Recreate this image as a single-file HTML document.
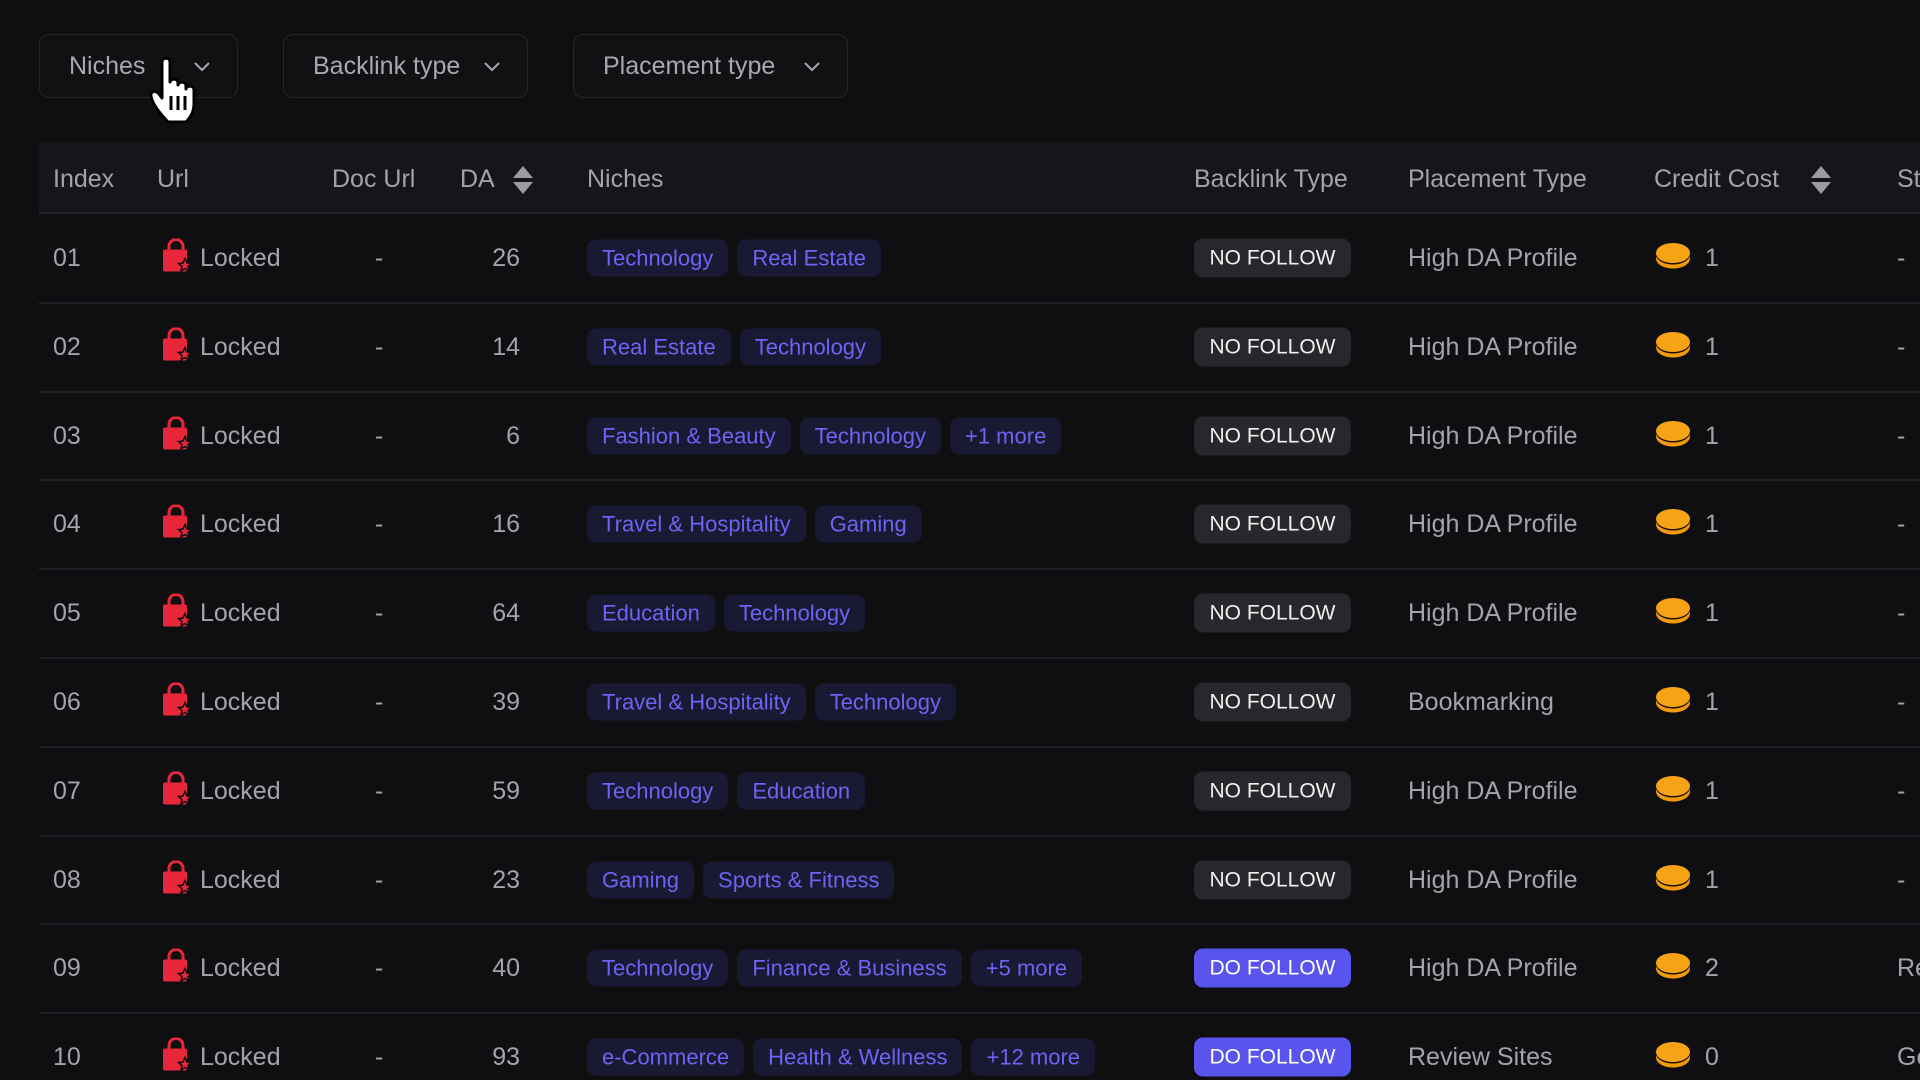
<!DOCTYPE html>
<html><head><meta charset="utf-8"><style>
*{margin:0;padding:0;box-sizing:border-box}
body{width:1920px;height:1080px;background:#0f0f12;overflow:hidden;position:relative;font-family:"Liberation Sans",sans-serif;color:#a3a3ab}
.btn{position:absolute;top:34px;height:64px;border:1.5px solid #26262c;border-radius:10px;background:#111114;display:flex;align-items:center;padding-left:29px;font-size:25px;color:#a8a8b0}
.btn svg{position:absolute;right:26px;top:26px}
.hdr{position:absolute;left:39px;top:143px;width:1881px;height:71px;background:#16161a;border-bottom:2px solid #23232a}
.h{position:absolute;top:164px;font-size:25px;color:#a3a3ab;line-height:30px}
.sort{position:absolute;top:165px}
.sep{position:absolute;left:39px;width:1881px;height:2px;background:#1f1f25}
.c{position:absolute;font-size:25px;line-height:30px;color:#a3a3ab;transform:translateY(-50%)}
.tags{position:absolute;left:587px;display:flex;gap:9px;transform:translateY(-50%)}
.tag{height:37px;border-radius:9px;background:#1a1933;color:#6c64f2;font-size:22px;line-height:37px;padding:0 15px;white-space:nowrap}
.badge{position:absolute;left:1194px;width:157px;height:39px;border-radius:9px;background:#27272c;color:#f0f0f0;font-size:21px;line-height:39px;text-align:center;transform:translateY(-50%)}
.badge.do{background:#5a54ef;color:#fff}
.lock{position:absolute;left:160px;transform:translateY(-50%)}
.coin{position:absolute;left:1655px;transform:translateY(-50%)}
</style></head><body>
<div class="btn" style="left:39px;width:199px">Niches<svg width="18" height="12" viewBox="0 0 18 12"><path d="M2 2l7 7 7-7" fill="none" stroke="#a8a8b0" stroke-width="2"/></svg></div>
<div class="btn" style="left:283px;width:245px">Backlink type<svg width="18" height="12" viewBox="0 0 18 12"><path d="M2 2l7 7 7-7" fill="none" stroke="#a8a8b0" stroke-width="2"/></svg></div>
<div class="btn" style="left:573px;width:275px">Placement type<svg width="18" height="12" viewBox="0 0 18 12"><path d="M2 2l7 7 7-7" fill="none" stroke="#a8a8b0" stroke-width="2"/></svg></div>
<svg style="position:absolute;left:146px;top:56px" width="64" height="68" viewBox="0 0 64 68"><path d="M16 6c0-5 8-5 8 0v20c1-4 8-4 8 1v2c1-4 8-4 8 1v3c1-4 8-4 8 1v14c0 8-4 14-8 18H22C16 60 6 48 5 40c-1-5 5-6 8-2l3 4z" fill="#fff" stroke="#000" stroke-width="3" stroke-linejoin="round"/><path d="M25 40v14M32 40v14M39 40v14" stroke="#000" stroke-width="3"/></svg>
<div class="hdr"></div>
<div class="h" style="left:53px">Index</div>
<div class="h" style="left:157px">Url</div>
<div class="h" style="left:332px">Doc Url</div>
<div class="h" style="left:460px">DA</div>
<svg class="sort" style="left:512px" width="22" height="30" viewBox="0 0 22 30"><path d="M11 1l10 12H1zM11 29L1 17h20z" fill="#9b9ba3"/></svg>
<div class="h" style="left:587px">Niches</div>
<div class="h" style="left:1194px">Backlink Type</div>
<div class="h" style="left:1408px">Placement Type</div>
<div class="h" style="left:1654px">Credit Cost</div>
<svg class="sort" style="left:1810px" width="22" height="30" viewBox="0 0 22 30"><path d="M11 1l10 12H1zM11 29L1 17h20z" fill="#9b9ba3"/></svg>
<div class="h" style="left:1897px">St</div>
<div id="rows"></div>
<script>
var d=[
["01","26",["Technology","Real Estate"],0,"High DA Profile","1","-"],
["02","14",["Real Estate","Technology"],0,"High DA Profile","1","-"],
["03","6",["Fashion &amp; Beauty","Technology","+1 more"],0,"High DA Profile","1","-"],
["04","16",["Travel &amp; Hospitality","Gaming"],0,"High DA Profile","1","-"],
["05","64",["Education","Technology"],0,"High DA Profile","1","-"],
["06","39",["Travel &amp; Hospitality","Technology"],0,"Bookmarking","1","-"],
["07","59",["Technology","Education"],0,"High DA Profile","1","-"],
["08","23",["Gaming","Sports &amp; Fitness"],0,"High DA Profile","1","-"],
["09","40",["Technology","Finance &amp; Business","+5 more"],1,"High DA Profile","2","Re"],
["10","93",["e-Commerce","Health &amp; Wellness","+12 more"],1,"Review Sites","0","Ge"]];
var h="";
var lock='<svg width="32" height="34" viewBox="0 0 32 34"><path d="M9 12V8a7 7 0 0 1 14 0v4" fill="none" stroke="#e8283a" stroke-width="3"/><rect x="3" y="11" width="24" height="22" rx="2" fill="#e8283a"/><path d="M25 20l2 4.5 4.5.5-3.5 3 1 4.5-4-2.5-4 2.5 1-4.5-3.5-3 4.5-.5z" fill="#e8283a" stroke="#0f0f12" stroke-width="1.5"/></svg>';
var coin='<svg width="36" height="28" viewBox="0 0 36 28"><ellipse cx="18" cy="17" rx="17" ry="10" fill="#f39a0b"/><ellipse cx="18" cy="13" rx="17" ry="10" fill="#1a1206"/><ellipse cx="18" cy="11.5" rx="17" ry="10" fill="#f7a316"/></svg>';
d.forEach(function(r,i){var y=258+i*88.8;
if(i>0)h+='<div class="sep" style="top:'+(y-45)+'px"></div>';
h+='<div class="c" style="left:53px;top:'+y+'px">'+r[0]+'</div>';
h+='<div class="lock" style="top:'+y+'px">'+lock+'</div>';
h+='<div class="c" style="left:200px;top:'+y+'px">Locked</div>';
h+='<div class="c" style="left:375px;top:'+y+'px">-</div>';
h+='<div class="c" style="left:460px;width:60px;text-align:right;top:'+y+'px">'+r[1]+'</div>';
h+='<div class="tags" style="top:'+y+'px">'+r[2].map(function(t){return '<div class="tag">'+t+'</div>'}).join('')+'</div>';
h+='<div class="badge'+(r[3]?' do':'')+'" style="top:'+y+'px">'+(r[3]?'DO FOLLOW':'NO FOLLOW')+'</div>';
h+='<div class="c" style="left:1408px;top:'+y+'px">'+r[4]+'</div>';
h+='<div class="coin" style="top:'+y+'px">'+coin+'</div>';
h+='<div class="c" style="left:1705px;top:'+y+'px">'+r[5]+'</div>';
h+='<div class="c" style="left:1897px;top:'+y+'px">'+r[6]+'</div>';
});
document.getElementById('rows').innerHTML=h;
</script>
</body></html>
